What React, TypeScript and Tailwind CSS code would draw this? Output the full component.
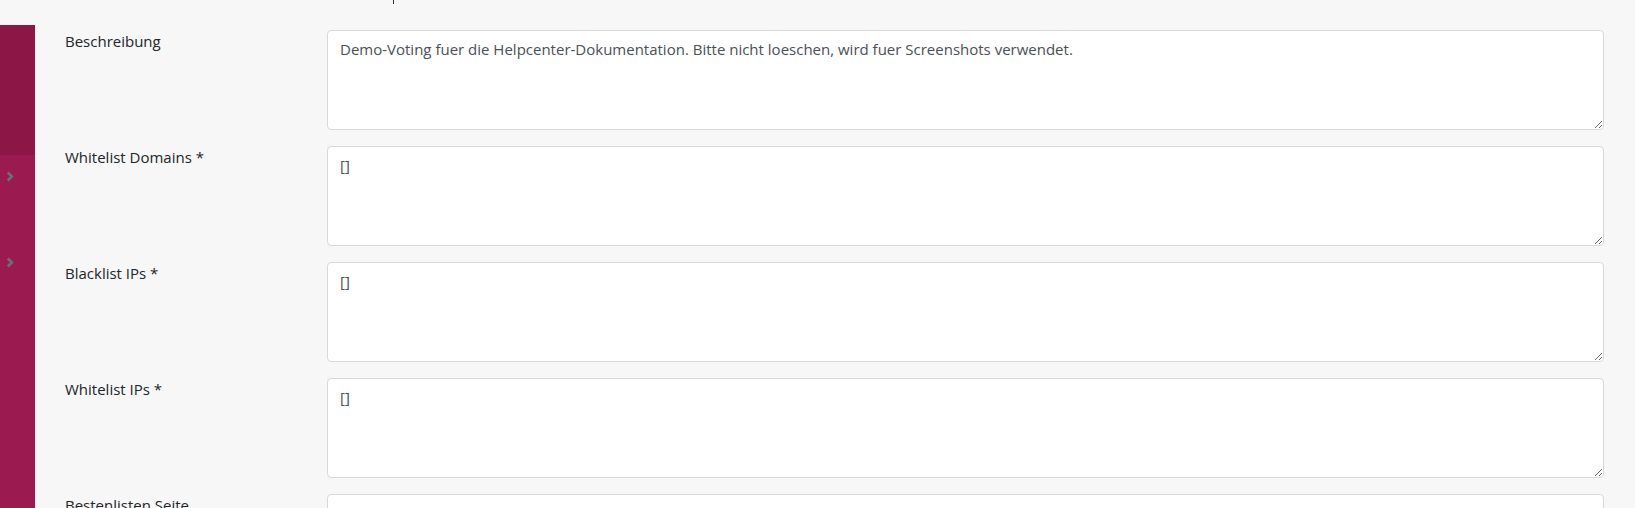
import { useState } from "react";

type Field = {
  label: string;
  value: string;
};

const fields: Field[] = [
  {
    label: "Beschreibung",
    value:
      "Demo-Voting fuer die Helpcenter-Dokumentation. Bitte nicht loeschen, wird fuer Screenshots verwendet.",
  },
  { label: "Whitelist Domains *", value: "[]" },
  { label: "Blacklist IPs *", value: "[]" },
  { label: "Whitelist IPs *", value: "[]" },
];

function Chevron() {
  return (
    <svg width="8" height="11" viewBox="0 0 8 11" className="text-[#66717b]">
      <path d="M1.8 1.5 L5.8 5.5 L1.8 9.5" fill="none" stroke="currentColor" strokeWidth="2.6" />
    </svg>
  );
}

function FormRow({ field }: { field: Field }) {
  const [value, setValue] = useState(field.value);
  return (
    <div className="flex mb-4">
      <label className="w-[262px] shrink-0 -mt-[1px] text-[15px] leading-6 text-[#212529]">
        {field.label}
      </label>
      <textarea
        value={value}
        onChange={(e) => setValue(e.target.value)}
        className="flex-1 h-[100px] rounded border border-[#d9d9d9] bg-white px-3 py-[6px] text-[15px] leading-6 text-[#495057] outline-none"
      />
    </div>
  );
}

export default function App() {
  return (
    <div className="flex flex-col h-screen overflow-hidden bg-[#f7f7f7] font-['Open_Sans',sans-serif]">
      <div className="h-[25px] shrink-0 relative">
        <span className="absolute left-[393px] top-0 h-[4px] w-[1px] bg-[#333]" />
      </div>
      <div className="flex flex-1">
        <aside className="w-[35px] shrink-0 bg-[#9b1b50] flex flex-col">
          <div className="h-[130px] bg-[#8c1747]" />
          <div className="h-[86px] pt-[16px] pl-[6px]">
            <Chevron />
          </div>
          <div className="h-[86px] pt-[16px] pl-[6px]">
            <Chevron />
          </div>
        </aside>
        <main className="flex-1 pl-[30px] pr-[31px] pt-[5px]">
          {fields.map((f) => (
            <FormRow key={f.label} field={f} />
          ))}
          <div className="flex">
            <label className="w-[262px] shrink-0 -mt-[1px] text-[15px] leading-6 text-[#212529]">
              Bestenlisten Seite
            </label>
            <input className="flex-1 h-[38px] rounded border border-[#d9d9d9] bg-white px-3" />
          </div>
        </main>
      </div>
    </div>
  );
}
